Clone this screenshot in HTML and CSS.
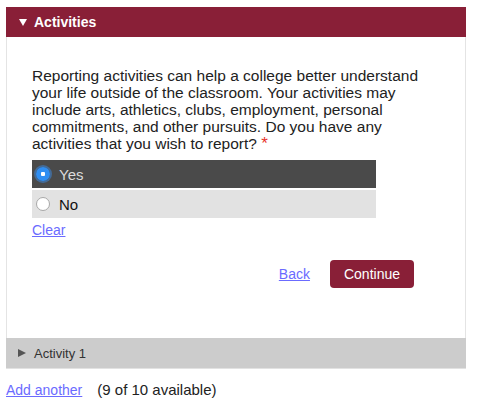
FILE: index.html
```html
<!DOCTYPE html>
<html>
<head>
<meta charset="utf-8">
<link rel="stylesheet" href="styles.css">
</head>
<body>
<div class="panel">
  <div class="panel-head"><span class="tri-down"></span><span class="head-title">Activities</span></div>
  <div class="panel-body">
    <p class="question">Reporting activities can help a college better understand your life outside of the classroom. Your activities may include arts, athletics, clubs, employment, personal commitments, and other pursuits. Do you have any activities that you wish to report? <span class="req">*</span></p>
    <div class="options">
      <label class="option selected"><span class="radio on"></span><span>Yes</span></label>
      <label class="option"><span class="radio"></span><span>No</span></label>
    </div>
    <a class="link clear" href="#">Clear</a>
    <div class="actions">
      <a class="link" href="#">Back</a>
      <button class="btn">Continue</button>
    </div>
  </div>
  <div class="sub-head"><span class="tri-right"></span><span>Activity 1</span></div>
</div>
<div class="footer">
  <a class="link" href="#">Add another</a>
  <span class="avail">(9 of 10 available)</span>
</div>
</body>
</html>
```
FILE: styles.css
```css
html, body { margin: 0; padding: 0; background: #fff; }
body {
  font-family: "Liberation Sans", Arial, sans-serif;
  color: #222;
  padding: 7px 13px 0 6px;
}
.panel {
  border-left: 1px solid #e4e4e4;
  border-right: 1px solid #e4e4e4;
  width: 460px;
  box-sizing: border-box;
}
.panel-head {
  background: #891f37;
  height: 30px;
  margin: 0 -1px;
  display: flex;
  align-items: center;
  color: #fff;
  font-weight: bold;
  font-size: 14px;
}
.tri-down {
  width: 0; height: 0;
  border-left: 4px solid transparent;
  border-right: 4px solid transparent;
  border-top: 7px solid #fff;
  margin: 1px 7px 0 13px;
}
.panel-body {
  padding: 30px 0 50px 25px;
}
.question {
  margin: 0;
  font-size: 15.5px;
  line-height: 17px;
  color: #222;
  width: 400px;
}
.req { color: #e8342c; font-size: 17px; line-height: 17px; }
.options {
  margin-top: 8px;
  width: 344px;
  display: flex;
  flex-direction: column;
  gap: 2px;
}
.option {
  height: 28px;
  display: flex;
  align-items: center;
  background: #e2e2e2;
  font-size: 15px;
  color: #111;
}
.option.selected { background: #4a4a4a; color: #dcdcdc; }
.radio {
  width: 14px; height: 14px;
  border-radius: 50%;
  box-sizing: border-box;
  border: 1px solid #a8a8a8;
  background: #fff;
  margin: 0 9px 0 4px;
  flex: none;
}
.radio.on {
  border: none;
  background: radial-gradient(circle, #fff 0 2px, #2f8ef2 2.5px);
  box-shadow: 0 0 0 2px rgba(60, 140, 230, 0.5);
}
.link {
  color: #6b6bff;
  font-size: 14px;
  text-decoration: underline;
}
.clear { display: inline-block; margin-top: 4px; }
.actions {
  display: flex;
  justify-content: flex-end;
  align-items: center;
  gap: 20px;
  padding-right: 51px;
  margin-top: 21px;
}
.btn {
  background: #891f37;
  color: #fff;
  border: none;
  border-radius: 4px;
  height: 28px;
  padding: 0 14px;
  font-family: "Liberation Sans", Arial, sans-serif;
  font-size: 14px;
}
.sub-head {
  background: #cccccc;
  height: 30px;
  border-bottom: 1px solid #e2e2e2;
  margin: 0 -1px;
  display: flex;
  align-items: center;
  font-size: 13px;
  color: #333;
}
.tri-right {
  width: 0; height: 0;
  border-top: 4px solid transparent;
  border-bottom: 4px solid transparent;
  border-left: 8px solid #555;
  margin: 0 8px 0 12px;
}
.footer {
  margin-top: 12px;
  display: flex;
  align-items: baseline;
  gap: 15px;
}
.avail { color: #222; font-size: 15px; }
```
